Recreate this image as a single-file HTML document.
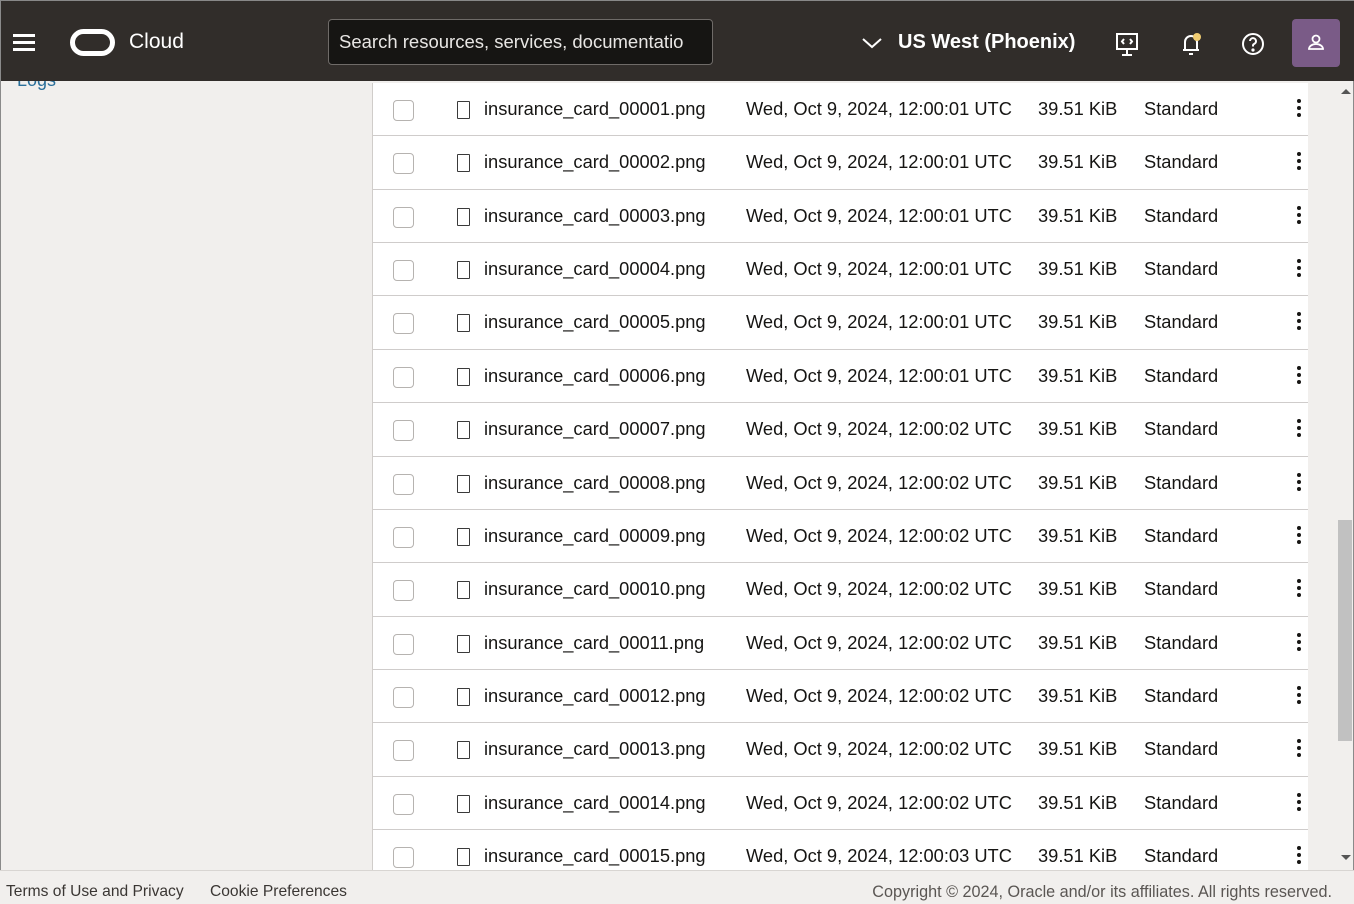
<!DOCTYPE html>
<html><head><style>
*{margin:0;padding:0;box-sizing:border-box}
body{width:1354px;height:904px;overflow:hidden;background:#f1efed;font-family:"Liberation Sans",Arial,sans-serif;position:relative;border:1px solid #8a8a8a}
.hdr{position:absolute;left:0;top:-1px;width:1354px;height:81px;background:#312d2a;border-top:1px solid #888}
.t{position:absolute;color:#fff;white-space:nowrap}
.search{position:absolute;left:327px;top:18px;width:385px;height:46px;background:#161513;border:1px solid #6f6b68;border-radius:4px;color:#e8e6e4;font-size:18.5px;line-height:44px;padding-left:10px}
.tbl{position:absolute;left:371px;top:82px;width:936px;height:787px;background:#fff;overflow:hidden;border-left:1px solid #d0cdca}
.row{position:absolute;left:0;width:936px;height:53.36px;border-bottom:1px solid #cfcccb;font-size:18.3px;color:#161513}
.row span{position:absolute;top:15px;white-space:nowrap}
.cb{position:absolute;left:20px;top:17px;width:21px;height:21px;border:1px solid #b6b3b0;border-radius:4px}
.doc{position:absolute;left:84px;top:18px;width:13px;height:18px;border:1.5px solid #3a3a3a;border-radius:1px}
.dots{position:absolute;left:924px;top:16px;width:4px}
.dots i{display:block;width:4px;height:4px;background:#161513;border-radius:50%;margin-bottom:3px}
.foot{position:absolute;left:-1px;top:869px;width:1354px;height:34px;background:#f1efed;border-top:1px solid #d8d5d2;font-size:15.6px;color:#3a3633}
</style></head><body>
<div class="hdr">
<div style="position:absolute;left:12px;top:33px;width:22px;height:2.5px;background:#fff;box-shadow:0 7px 0 #fff,0 14px 0 #fff"></div>
<div style="position:absolute;left:69px;top:28px;width:45px;height:27px;border:5px solid #fff;border-radius:14px"></div>
<div class="t" style="left:128px;top:29px;font-size:21px">Cloud</div>
<div class="search">Search resources, services, documentatio</div>
<svg style="position:absolute;left:860px;top:35px" width="22" height="14"><path d="M2 3l9 8 9-8" stroke="#fff" stroke-width="2" fill="none"/></svg>
<div class="t" style="left:897px;top:30px;font-size:20px;font-weight:bold">US West (Phoenix)</div>
<svg style="position:absolute;left:1113px;top:31px" width="26" height="26" fill="none" stroke="#fff" stroke-width="2"><rect x="3" y="2" width="20" height="15"/><path d="M13 17v5M8 23h10M10 7l-2 2.5 2 2.5M16 7l2 2.5-2 2.5"/></svg>
<svg style="position:absolute;left:1177px;top:29px" width="28" height="28" fill="none" stroke="#fff" stroke-width="2"><path d="M7 20V12a6 6 0 0 1 12 0v8zM5 20h16M11 24h4"/><circle cx="19" cy="7" r="4" fill="#f0cc71" stroke="none"/></svg>
<svg style="position:absolute;left:1239px;top:30px" width="26" height="26" fill="none" stroke="#fff" stroke-width="2"><circle cx="13" cy="13" r="10"/><path d="M10 10a3 3 0 1 1 4 3c-1 .5-1 1-1 2.5"/><circle cx="13" cy="19" r=".6" fill="#fff"/></svg>
<div style="position:absolute;left:1291px;top:18px;width:48px;height:48px;background:#7a5b87;border-radius:4px"><svg width="48" height="48" fill="none" stroke="#fff" stroke-width="1.8"><circle cx="24" cy="20" r="3.5"/><path d="M17 30a7 5 0 0 1 14 0z"/></svg></div>
</div>
<div style="position:absolute;left:16px;top:80px;color:#2a6f9a;font-size:18px;height:10px;overflow:hidden"><div style="margin-top:-11px">Logs</div></div>
<div class="tbl" id="tb"></div>
<div style="position:absolute;left:1335px;top:82px;width:17px;height:787px;background:#f1efed"></div>
<div style="position:absolute;left:1337px;top:519px;width:14px;height:221px;background:#c1c1c1"></div>
<div style="position:absolute;left:1340px;top:88px;border:5px solid transparent;border-bottom:5px solid #555;border-top:0"></div>
<div style="position:absolute;left:1340px;top:854px;border:5px solid transparent;border-top:5px solid #555;border-bottom:0"></div>
<div class="foot"><span style="position:absolute;left:6px;top:12px">Terms of Use and Privacy</span><span style="position:absolute;left:210px;top:12px">Cookie Preferences</span><span style="position:absolute;right:22px;top:12px;color:#5a5653;font-size:16.2px">Copyright © 2024, Oracle and/or its affiliates. All rights reserved.</span></div>
<script>
var h='';for(var i=1;i<=15;i++){var n=('0000'+i).slice(-5);var s=i<=6?'01':(i<=14?'02':'03');
h+='<div class="row" style="top:'+((i-1)*53.36)+'px"><div class="cb"></div><div class="doc"></div><span style="left:111px">insurance_card_'+n+'.png</span><span style="left:373px">Wed, Oct 9, 2024, 12:00:'+s+' UTC</span><span style="left:665px">39.51 KiB</span><span style="left:771px">Standard</span><div class="dots"><i></i><i></i><i></i></div></div>';}
document.getElementById('tb').innerHTML=h;
</script>
</body></html>
